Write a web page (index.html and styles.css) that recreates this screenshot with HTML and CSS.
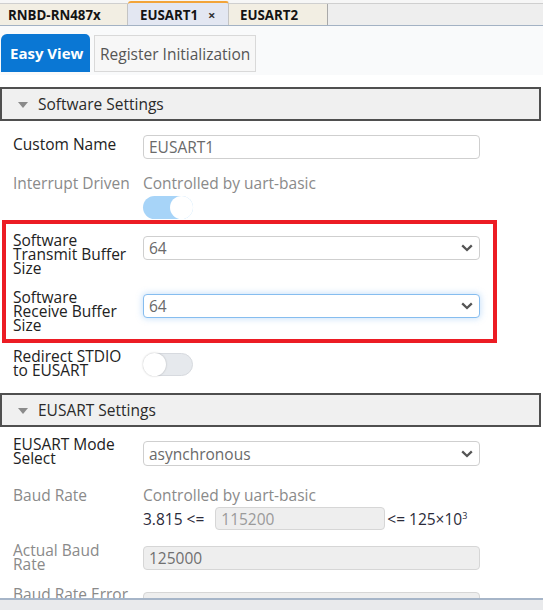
FILE: index.html
```html
<!DOCTYPE html>
<html>
<head>
<meta charset="utf-8">
<link rel="stylesheet" href="styles.css">
</head>
<body>
<div class="app">
  <div class="tabbar">
    <div class="tabstrip">
      <div class="tab tab-1">RNBD-RN487x</div>
      <div class="tab tab-2 active">EUSART1<span class="close">×</span></div>
      <div class="tab tab-3">EUSART2</div>
    </div>
  </div>

  <div class="toolbar">
    <div class="view-btn primary">Easy View</div>
    <div class="view-btn">Register Initialization</div>
  </div>

  <div class="content">
    <div class="section-head"><span class="caret"></span>Software Settings</div>
    <div class="form form-sw">
      <div class="row row-name">
        <div class="label single">Custom Name</div>
        <div class="field text">EUSART1</div>
      </div>
      <div class="row row-interrupt">
        <div class="label muted line">Interrupt Driven</div>
        <div class="control">
          <div class="note">Controlled by uart-basic</div>
          <div class="toggle on"><span class="knob"></span></div>
        </div>
      </div>
      <div class="highlight">
        <div class="row row-tx">
          <div class="label">Software<br>Transmit Buffer<br>Size</div>
          <div class="field select">64<svg class="chev" width="12" height="8" viewBox="0 0 12 8"><path d="M1.2 1.4 L6 6 L10.8 1.4" fill="none" stroke="#555" stroke-width="2.3"/></svg></div>
        </div>
        <div class="row row-rx">
          <div class="label">Software<br>Receive Buffer<br>Size</div>
          <div class="field select focus">64<svg class="chev" width="12" height="8" viewBox="0 0 12 8"><path d="M1.2 1.4 L6 6 L10.8 1.4" fill="none" stroke="#555" stroke-width="2.3"/></svg></div>
        </div>
      </div>
      <div class="row row-redirect">
        <div class="label">Redirect STDIO<br>to EUSART</div>
        <div class="toggle off"><span class="knob"></span></div>
      </div>
    </div>

    <div class="section-head second"><span class="caret"></span>EUSART Settings</div>
    <div class="form form-eu">
      <div class="row row-mode">
        <div class="label">EUSART Mode<br>Select</div>
        <div class="field select">asynchronous<svg class="chev" width="12" height="8" viewBox="0 0 12 8"><path d="M1.2 1.4 L6 6 L10.8 1.4" fill="none" stroke="#555" stroke-width="2.3"/></svg></div>
      </div>
      <div class="row row-baud">
        <div class="label muted line">Baud Rate</div>
        <div class="control">
          <div class="note">Controlled by uart-basic</div>
          <div class="range">
            <span class="bound">3.815 &lt;=</span>
            <div class="field disabled small">115200</div>
            <span class="bound">&lt;= 125×10<sup>3</sup></span>
          </div>
        </div>
      </div>
      <div class="row row-actual">
        <div class="label muted">Actual Baud<br>Rate</div>
        <div class="field disabled">125000</div>
      </div>
      <div class="row row-error">
        <div class="label muted">Baud Rate Error</div>
        <div class="field disabled">0.000</div>
      </div>
    </div>
  </div>

  <div class="statusbar"></div>
</div>
</body>
</html>
```

FILE: styles.css
```css
* { box-sizing: border-box; }

html, body {
  margin: 0;
  padding: 0;
  background: #ffffff;
}

body {
  font-family: "Open Sans", "Noto Sans", sans-serif;
  font-size: 15.5px;
  color: #222;
}

.app {
  width: 543px;
  height: 610px;
  display: flex;
  flex-direction: column;
  overflow: hidden;
}

/* ---------- tab bar ---------- */
.tabbar {
  height: 26px;
  padding-top: 3px;
  background: #f6f6f6;
  flex: none;
}

.tabstrip {
  height: 23px;
  display: flex;
  background: #eeeeee;
  border-top: 1px solid #cfcfcf;
  border-bottom: 1px solid #a3b2c4;
}

.tab {
  display: flex;
  align-items: center;
  font-size: 13.3px;
  font-weight: 700;
  color: #141414;
  background: #f2eee3;
  border-right: 1px solid #c4c4c4;
  white-space: nowrap;
}

.tab-1 { width: 128px; padding-left: 8px; }
.tab-2 { width: 101px; padding-left: 12px; }
.tab-3 { width: 99px; padding-left: 11px; border-right-color: #a9a9a9; }

.tab.active {
  background: #e3e7f2;
  margin-top: -3px;
  border-top: 2px solid #f2a43a;
  border-radius: 3px 3px 0 0;
  padding-top: 1px;
}

.close {
  margin-left: 10px;
  font-size: 13px;
  color: #333;
}

/* ---------- toolbar ---------- */
.toolbar {
  height: 49px;
  flex: none;
  display: flex;
  align-items: flex-end;
  gap: 4px;
  padding: 0 0 3px 1px;
  background: #f9fafb;
}

.view-btn {
  height: 37px;
  display: flex;
  align-items: center;
  padding: 0 5px;
  background: #f7f7f7;
  border: 1px solid #d9d9d9;
  color: #555;
  white-space: nowrap;
}

.view-btn.primary {
  height: 38px;
  width: 89px;
  padding: 0 0 0 9px;
  background: #0a77d4;
  border: none;
  border-radius: 6px 5px 0 0;
  color: #fff;
  font-weight: 700;
  font-size: 15px;
}

/* ---------- content ---------- */
.content {
  flex: 1;
  overflow: hidden;
  padding-top: 12px;
  background: #ffffff;
}

.section-head {
  width: 541px;
  height: 34px;
  display: flex;
  align-items: center;
  padding-left: 16px;
  background: #f0f0f0;
  border: 2px solid #4f4f4f;
  color: #2a2a2a;
}

.section-head.second { margin-top: 16px; }

.caret {
  width: 0;
  height: 0;
  border-left: 5.5px solid transparent;
  border-right: 5.5px solid transparent;
  border-top: 6px solid #8a8a8a;
  margin-right: 10px;
  margin-top: 1px;
}

.form { padding-left: 13px; }
.form-sw { padding-top: 14px; }
.form-eu { padding-top: 10px; }

.row {
  display: grid;
  grid-template-columns: 120px 337px;
  column-gap: 10px;
  align-items: start;
}

.label {
  line-height: 14px;
  color: #222;
}

.label.single { line-height: 18px; }
.label.line { line-height: 20px; }
.label.muted { color: #8a8a8a; }

.control { display: flex; flex-direction: column; }

.note {
  line-height: 20px;
  color: #8a8a8a;
}

/* fields */
.field {
  height: 24px;
  display: flex;
  align-items: center;
  padding-left: 5px;
  border: 1px solid #cfcfcf;
  border-radius: 4px;
  background: #fff;
  color: #6a6a6a;
  white-space: nowrap;
  overflow: hidden;
}

.field.select {
  justify-content: space-between;
  padding-right: 6px;
}

.field.focus {
  border-color: #86bdef;
  box-shadow: 0 0 6px 1px rgba(110, 175, 240, 0.35);
}

.field.disabled {
  background: #eeeeee;
  border-color: #d6d6d6;
  color: #707070;
}

.field.small {
  width: 170px;
  height: 23px;
  color: #9a9a9a;
}

.chev { flex: none; }

/* toggles */
.toggle {
  position: relative;
  width: 50px;
  height: 23px;
  border-radius: 12px;
}

.toggle.on { background: #a7d4f8; margin-top: 3px; }

.toggle.off {
  background: #e6e9ed;
  border: 1px solid #d7dadf;
  margin-top: 4px;
}

.knob {
  position: absolute;
  top: 0;
  width: 23px;
  height: 23px;
  border-radius: 50%;
  background: #fff;
}

.toggle.on .knob { right: 0; }

.toggle.off .knob {
  left: -1px;
  top: -1px;
  box-shadow: 0 0 2px rgba(0, 0, 0, 0.25);
}

/* highlighted group */
.highlight {
  margin: 5px 0 0 -7px;
  padding: 9px 0 7px 7px;
  width: 487px;
  outline: 4px solid #ec1c24;
}

.row-tx .field { margin-top: 3px; }
.row-rx { margin-top: 15px; }
.row-rx .field { margin-top: 4px; }

.row-interrupt { margin-top: 14px; }
.row-redirect { margin-top: 10px; }

.row-mode .field { margin-top: 4px; height: 25px; }

.row-baud { margin-top: 19px; }

.range {
  display: flex;
  align-items: center;
  margin-top: 2px;
  color: #2b2b3a;
}

.range .field { margin: 0 2px 0 11px; }

.bound { white-space: nowrap; }

.bound sup {
  font-size: 9px;
  vertical-align: 6px;
  line-height: 0;
}

.row-actual { margin-top: 13px; }
.row-actual .field { margin-top: 3px; }

.row-error { margin-top: 16px; }
.row-error .field { margin-top: 5px; }

/* ---------- bottom bar ---------- */
.statusbar {
  height: 12px;
  flex: none;
  background: #e9eaec;
  border-top: 2px solid #a6b5c8;
}
```
